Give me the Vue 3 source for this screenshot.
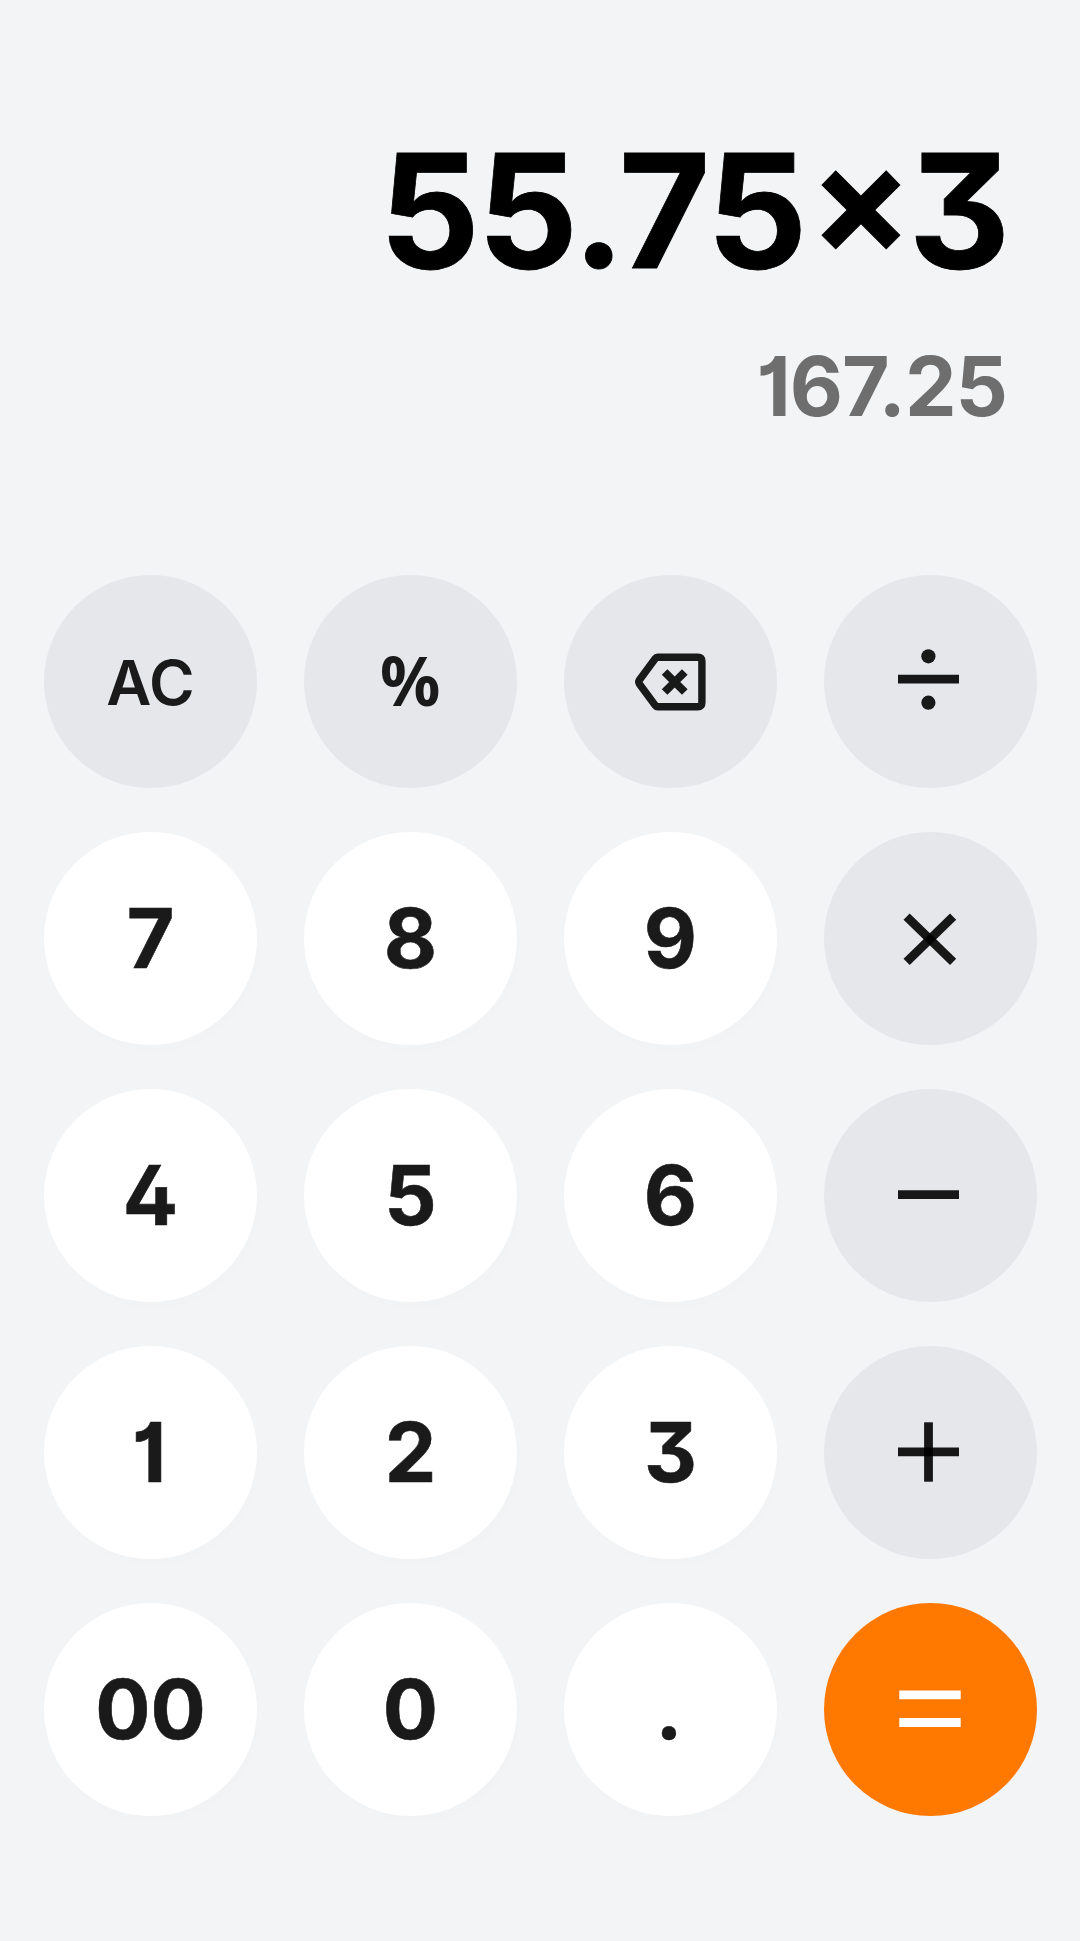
<template>
  <div class="calculator">
    <div class="display">
      <div class="expression">
        <span v-for="(part, i) in parts" :key="i" :class="getPartClass(part)">{{ part }}</span>
      </div>
      <div class="result">{{ result }}</div>
    </div>
    <div class="keypad">
      <button
        v-for="key in keys"
        :key="key.id"
        class="key"
        :class="`key-${key.type}`"
        :aria-label="key.id"
      >
        <svg v-if="key.icon" class="icon" viewBox="0 0 213 213">
          <template v-if="key.icon === 'backspace'">
            <path
              class="outline"
              d="M93.5 82.3H133.7Q137.9 82.3 137.9 86.5V127.5Q137.9 131.7 133.7 131.7H93.5Q92.2 131.7 91.3 130.5L75.6 109.2Q74 107 75.6 104.8L91.3 83.5Q92.2 82.3 93.5 82.3Z"
            />
            <path class="cross" d="M100.6 97L120.8 117M120.8 97L100.6 117" />
          </template>
          <template v-else>
            <line
              v-for="(l, i) in lines[key.icon]"
              :key="i"
              :x1="l[0]"
              :y1="l[1]"
              :x2="l[2]"
              :y2="l[3]"
            />
          </template>
          <template v-if="key.icon === 'divide'">
            <circle cx="104.4" cy="81.3" r="7.1" />
            <circle cx="104.4" cy="127.7" r="7.1" />
          </template>
        </svg>
        <span v-else :class="[`label-${key.type}`, { percent: key.id === '%', narrow: key.id === '1' || key.id === '.' }]">{{ key.id }}</span>
      </button>
    </div>
  </div>
</template>

<script setup>
import { ref, computed } from 'vue';

const expression = ref('55.75×3');
const result = ref('167.25');

const parts = computed(() => expression.value.match(/[\d.]+|[^\d.]/g));

const getPartClass = (part) => {
  return /\d/.test(part) ? 'digits' : 'operator';
};

const keys = [
  { id: 'AC', type: 'action' },
  { id: '%', type: 'action' },
  { id: 'backspace', type: 'action', icon: 'backspace' },
  { id: 'divide', type: 'action', icon: 'divide' },
  { id: '7', type: 'number' },
  { id: '8', type: 'number' },
  { id: '9', type: 'number' },
  { id: 'times', type: 'action', icon: 'times' },
  { id: '4', type: 'number' },
  { id: '5', type: 'number' },
  { id: '6', type: 'number' },
  { id: 'minus', type: 'action', icon: 'minus' },
  { id: '1', type: 'number' },
  { id: '2', type: 'number' },
  { id: '3', type: 'number' },
  { id: 'plus', type: 'action', icon: 'plus' },
  { id: '00', type: 'number' },
  { id: '0', type: 'number' },
  { id: '.', type: 'number' },
  { id: 'equals', type: 'equals', icon: 'equals' }
];

// x1, y1, x2, y2 for each stroke
const lines = {
  divide: [[74, 104.2, 135, 104.2]],
  times: [
    [82.6, 84.6, 129.1, 129.9],
    [129.1, 84.6, 82.6, 129.9]
  ],
  minus: [[74, 105.7, 135, 105.7]],
  plus: [
    [74, 105.8, 135, 105.8],
    [104.5, 76.3, 104.5, 135.7]
  ],
  equals: [
    [75.3, 91.8, 136.7, 91.8],
    [75.3, 119.5, 136.7, 119.5]
  ]
};
</script>

<style>
body {
  background: #f2f4f6;
}
</style>

<style scoped>
.calculator {
  box-sizing: border-box;
  width: 1080px;
  height: 1941px;
  padding: 115px 43px 0 44px;
  background: #f2f4f6;
  font-family: Inter, sans-serif;
  font-feature-settings: 'cv01', 'cv02', 'cv09';
  overflow: hidden;
}

.display {
  height: 460px;
  padding-right: 30px;
  text-align: right;
  white-space: nowrap;
}

.expression {
  display: flex;
  justify-content: flex-end;
  margin-right: -1px;
  font-size: 157.5px;
  line-height: 191px;
  font-weight: 700;
  letter-spacing: -2.2px;
  color: #000;
  -webkit-text-stroke: 0.8px #000;
}

.expression .operator {
  padding-left: 4px;
  font-size: 152px;
  letter-spacing: -4px;
  font-feature-settings: 'case';
}

.result {
  margin-top: 33px;
  font-size: 82px;
  line-height: 96px;
  font-weight: 700;
  letter-spacing: -1px;
  color: #6e6e6e;
}

.keypad {
  display: grid;
  grid-template-columns: repeat(4, 213px);
  gap: 44px 47px;
}

.key {
  display: flex;
  align-items: center;
  justify-content: center;
  width: 213px;
  height: 213px;
  padding: 0;
  border: none;
  border-radius: 50%;
  font: inherit;
  font-feature-settings: 'cv01', 'cv02', 'cv09';
  color: #1a1a1a;
  cursor: pointer;
}

.key-number {
  background: #fff;
  box-shadow: 4px 8px 40px rgba(0, 0, 0, 0.008);
}

.key-action {
  background: #e5e7eb;
}

.key-equals {
  background: #ff7800;
}

.label-number {
  font-size: 82px;
  line-height: 96px;
  font-weight: 700;
  -webkit-text-stroke: 0.6px #1a1a1a;
}

.label-number.narrow {
  padding-right: 3px;
}

.label-action {
  font-size: 62px;
  line-height: 72px;
  padding-top: 2px;
  font-weight: 600;
}

.label-action.percent {
  padding: 0 0 5px;
  font-family: 'Noto Sans', sans-serif;
  font-size: 69px;
  font-weight: 700;
  transform: scaleX(0.97);
}

.icon {
  width: 213px;
  height: 213px;
  stroke: rgba(0, 0, 0, 0.9);
  stroke-width: 8.8;
  fill: none;
}

.icon circle {
  fill: #181a19;
  stroke: none;
}

.icon .outline {
  stroke: #181a19;
  stroke-width: 7.4;
}

.icon .cross {
  stroke: #181a19;
  stroke-width: 8;
}

.key-equals .icon {
  stroke: #fff;
}
</style>
